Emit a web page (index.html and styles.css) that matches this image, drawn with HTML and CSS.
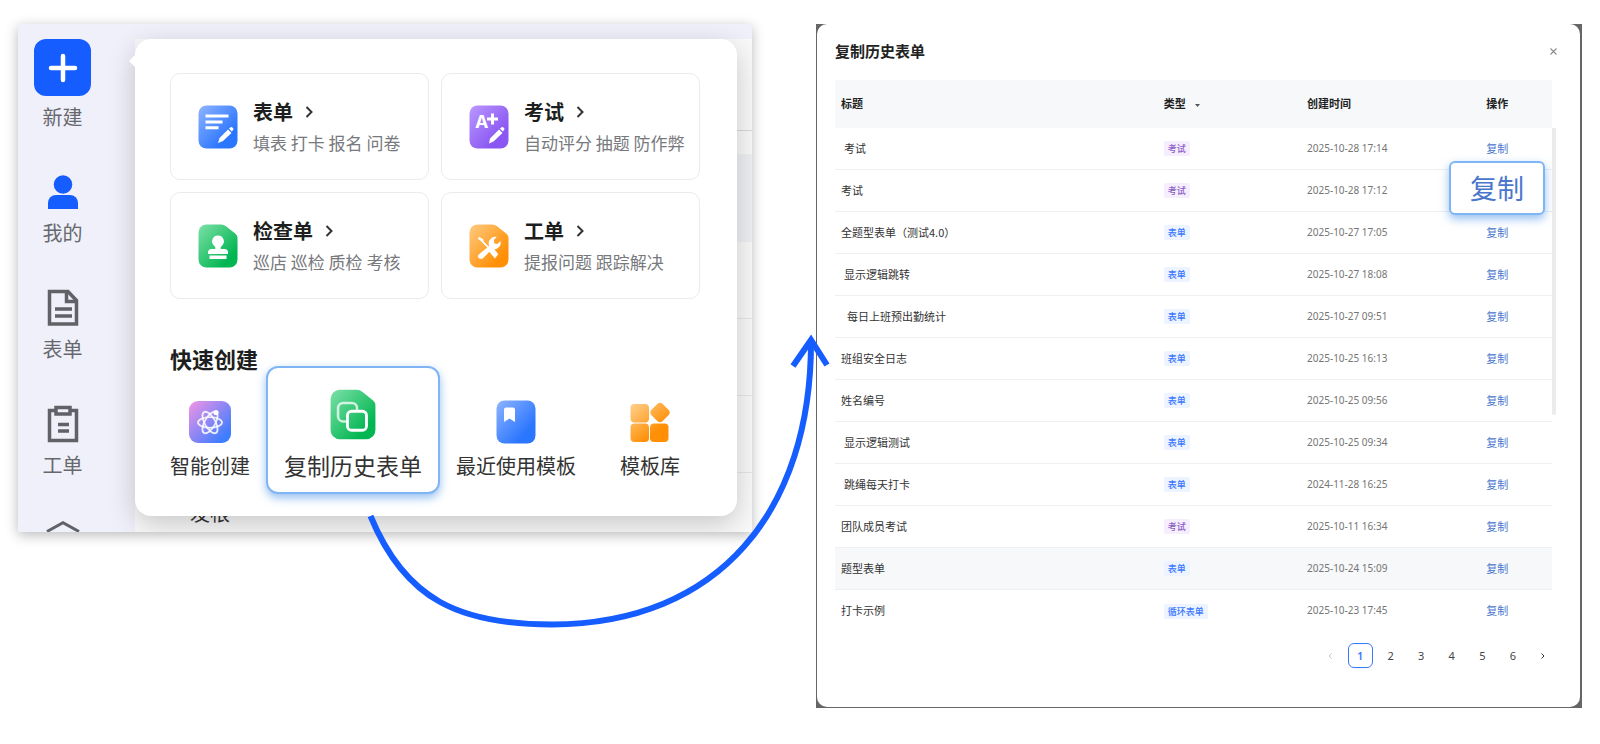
FILE: index.html
```html
<!DOCTYPE html>
<html lang="zh-CN">
<head>
<meta charset="utf-8">
<meta name="viewport" content="width=device-width, initial-scale=1">
<title>复制历史表单</title>
<link rel="stylesheet" href="styles.css">
</head>
<body>
<main class="page">
  <section class="launcher">
    <nav class="sidebar" aria-label="主导航">
      <button class="nav-item" type="button">
        <span class="nav-plus">
          <svg width="57" height="57" viewBox="0 0 57 57"><path d="M29 17v24M17 29h24" stroke="#fff" stroke-width="4.500" stroke-linecap="round"/></svg>
        </span>
        <span>新建</span>
      </button>
      <a class="nav-item nav-gap" href="#mine">
        <svg width="32" height="38" viewBox="0 0 32 38"><circle cx="16" cy="11.500" r="9.300" fill="#165dff"/><path d="M1 36v-6a8 8 0 0 1 8-8h14a8 8 0 0 1 8 8v6z" fill="#165dff"/></svg>
        <span>我的</span>
      </a>
      <a class="nav-item nav-gap" href="#forms">
        <svg width="32" height="38" viewBox="0 0 32 38" fill="none" stroke="#606267" stroke-width="3.500"><path d="M2.500 2.500h18.500l8.500 9v23.500h-27z"/><path d="M19.500 2.500v10h10M8 20h17M8 27h17"/></svg>
        <span>表单</span>
      </a>
      <a class="nav-item nav-gap" href="#orders">
        <svg width="32" height="38" viewBox="0 0 32 38" fill="none" stroke="#606267" stroke-width="3.500"><path d="M9 5.500H2.500v30h27v-30H23"/><path d="M9 2.500h14v6.500H9zM11 19.500h11M11 26h11"/></svg>
        <span>工单</span>
      </a>
      <a class="nav-item nav-gap" href="#more" aria-label="更多">
        <svg width="34" height="11" viewBox="0 0 34 11" fill="none" stroke="#606267" stroke-width="3"><path d="M1 10.500L17 1.800l16 8.700"/></svg>
      </a>
    </nav>

    <div class="workspace">
      <div class="backdrop" aria-hidden="true">
        <div class="backdrop-bar"></div>
        <div class="backdrop-head"></div>
        <div class="backdrop-sub"></div>
        <div class="backdrop-active"></div>
        <div class="backdrop-row"></div>
        <div class="backdrop-row"></div>
        <div class="backdrop-row"></div>
        <div class="backdrop-foot">发根</div>
      </div>

      <div class="popover">
        <div class="cards">
          <button class="card" type="button">
            <svg width="40" height="44" viewBox="0 0 40 44">
              <defs><linearGradient id="blue" x1="0" y1="0" x2="1" y2="1"><stop offset="0" stop-color="#8fb4ff"/><stop offset=".75" stop-color="#2b76ff"/></linearGradient></defs>
              <rect x=".5" y=".5" width="39" height="43" rx="8" fill="url(#blue)"/>
              <path d="M9 11h20M9 17h14M9 22.800h10" stroke="#fff" stroke-width="3" stroke-linecap="square"/>
              <path d="M20 38l1.500-5 8.500-8.500 3.500 3.500-8.500 8zM31 23.500l1.600-1.300q1-.5 1.800.2l.8.900q.6.900-.1 1.700l-1.400 1.500z" fill="#fff"/>
            </svg>
            <span class="card-text"><span class="card-title">表单<svg width="8" height="12" viewBox="0 0 8 12"><path d="M1.500 1l5 5-5 5"/></svg></span><span class="card-desc">填表 打卡 报名 问卷</span></span>
          </button>
          <button class="card" type="button">
            <svg width="40" height="44" viewBox="0 0 40 44">
              <defs><linearGradient id="violet" x1="0" y1="0" x2="1" y2="1"><stop offset="0" stop-color="#bb98ff"/><stop offset=".75" stop-color="#8a57f2"/></linearGradient></defs>
              <rect x=".5" y=".5" width="39" height="43" rx="8" fill="url(#violet)"/>
              <text class="grade" x="6" y="22.500">A</text>
              <path d="M23.500 8.500v11M18 14h11" stroke="#fff" stroke-width="3"/>
              <path d="M20 38.500l1-5 9-9 3.500 3.500-9 8.500zM31 23.500l1.600-1.300q1-.5 1.800.2l.8.900q.6.900-.1 1.700l-1.400 1.500z" fill="#fff"/>
            </svg>
            <span class="card-text"><span class="card-title">考试<svg width="8" height="12" viewBox="0 0 8 12"><path d="M1.500 1l5 5-5 5"/></svg></span><span class="card-desc">自动评分 抽题 防作弊</span></span>
          </button>
          <button class="card" type="button">
            <svg width="40" height="44" viewBox="0 0 40 44">
              <defs><linearGradient id="green" x1="0" y1="0" x2="1" y2="1"><stop offset="0" stop-color="#7de0a8"/><stop offset=".8" stop-color="#02b652"/></linearGradient></defs>
              <path d="M8.500.5H23q3 0 5 1.700l9.500 7.600q2 1.700 2 4.200v21.500a8 8 0 0 1-8 8h-23a8 8 0 0 1-8-8v-27a8 8 0 0 1 8-8z" fill="url(#green)"/>
              <path d="M20 11.500a6 6 0 0 1 3.200 11q-.9.900-.4 2.500h3.700a3.500 3.500 0 0 1 3.500 3.500v1.500h-20v-1.500a3.500 3.500 0 0 1 3.500-3.500h3.700q.5-1.600-.4-2.500a6 6 0 0 1 3.200-11zM11.500 31.500h17v3.500h-17z" fill="#fff"/>
            </svg>
            <span class="card-text"><span class="card-title">检查单<svg width="8" height="12" viewBox="0 0 8 12"><path d="M1.500 1l5 5-5 5"/></svg></span><span class="card-desc">巡店 巡检 质检 考核</span></span>
          </button>
          <button class="card" type="button">
            <svg width="40" height="44" viewBox="0 0 40 44">
              <defs><linearGradient id="orange" x1="0" y1="0" x2="1" y2="1"><stop offset="0" stop-color="#ffca80"/><stop offset=".8" stop-color="#ff8f05"/></linearGradient></defs>
              <path d="M8.500.5H23q3 0 5 1.700l9.500 7.600q2 1.700 2 4.200v21.500a8 8 0 0 1-8 8h-23a8 8 0 0 1-8-8v-27a8 8 0 0 1 8-8z" fill="url(#orange)"/>
              <path d="M9.200 14.800l1.300-.8 3 1.800.8 2.600 6 6" stroke="#fff" stroke-width="1.600" fill="#fff"/>
              <path d="M20.500 24.800l3-2.300 5.700 7.800-3.200 4.200-6-7z" fill="#fff"/>
              <path d="M9.500 33.800q-1.500-1.800.3-3.300l10.200-8.500q-1.300-5 2.500-8 2.400-1.800 5.300-1.200l-3 3.300.6 3.300 3.100.7 2.900-3.100q1 3-1.100 5.800-2.900 3.300-7.300 2.300l-9 9.200q-2.200 1.800-4.500-.5z" fill="#fff"/>
            </svg>
            <span class="card-text"><span class="card-title">工单<svg width="8" height="12" viewBox="0 0 8 12"><path d="M1.500 1l5 5-5 5"/></svg></span><span class="card-desc">提报问题 跟踪解决</span></span>
          </button>
        </div>

        <h2 class="quick-heading">快速创建</h2>
        <div class="quick">
          <button class="quick-item" type="button">
            <svg width="44" height="44" viewBox="0 0 44 44">
              <defs><linearGradient id="smart" x1="0" y1="0" x2="1" y2="1"><stop offset=".05" stop-color="#ea92e6"/><stop offset=".85" stop-color="#3f7dff"/></linearGradient></defs>
              <rect x="1" y="1" width="42" height="42" rx="9" fill="url(#smart)"/>
              <g fill="none" stroke="#fff" stroke-opacity=".85" stroke-width="1.800"><ellipse cx="22" cy="22.500" rx="12" ry="5.300"/><ellipse cx="22" cy="22.500" rx="12" ry="5.300" transform="rotate(60 22 22.500)"/><ellipse cx="22" cy="22.500" rx="12" ry="5.300" transform="rotate(120 22 22.500)"/></g>
              <circle cx="28" cy="12.500" r="2.600" fill="#fff"/>
            </svg>
            <span>智能创建</span>
          </button>
          <button class="quick-item quick-active" type="button">
            <svg width="46" height="51" viewBox="0 0 40 44">
              <path d="M8.500.5H23q3 0 5 1.700l9.500 7.600q2 1.700 2 4.200v21.500a8 8 0 0 1-8 8h-23a8 8 0 0 1-8-8v-27a8 8 0 0 1 8-8z" fill="url(#green)"/>
              <path d="M14 28h-2.500a4.500 4.500 0 0 1-4.500-4.500v-7a4.500 4.500 0 0 1 4.500-4.500h7.500a4.500 4.500 0 0 1 4.500 4.500V19" fill="none" stroke="#fff" stroke-opacity=".75" stroke-width="2.200"/>
              <rect x="15.200" y="19.200" width="16.500" height="16.500" rx="3.500" fill="none" stroke="#fff" stroke-width="2.500"/>
            </svg>
            <span>复制历史表单</span>
          </button>
          <button class="quick-item" type="button">
            <svg width="40" height="44" viewBox="0 0 40 44">
              <rect x=".5" y=".5" width="39" height="43" rx="8" fill="url(#blue)"/>
              <path d="M10 7.500h7q2 0 2 2V22l-5.500-3.500L8 22V9.500q0-2 2-2z" fill="#fff"/>
            </svg>
            <span>最近使用模板</span>
          </button>
          <button class="quick-item quick-last" type="button">
            <svg width="40" height="44" viewBox="0 0 40 44">
              <defs><linearGradient id="lib" gradientUnits="userSpaceOnUse" x1="4" y1="6" x2="32" y2="38"><stop offset="0" stop-color="#ffca80"/><stop offset=".8" stop-color="#ff8f05"/></linearGradient></defs>
              <g fill="url(#lib)"><rect x=".5" y="4" width="18.500" height="18.500" rx="4"/><rect x=".5" y="23.500" width="18.500" height="18.500" rx="4"/><rect x="20" y="23.500" width="18.500" height="18.500" rx="4"/><path d="M27.500 3.700q2.500-2 5 0l6.200 6.300q2 2.500 0 5L32.500 21.200q-2.500 2-5 0l-6.200-6.200q-2-2.500 0-5z"/></g>
            </svg>
            <span>模板库</span>
          </button>
        </div>
      </div>
    </div>
  </section>

  <section class="history">
    <div class="dialog" role="dialog" aria-labelledby="dialog-title">
      <header class="dialog-head">
        <h1 class="dialog-title" id="dialog-title">复制历史表单</h1>
        <button class="close" type="button" aria-label="关闭"><svg width="7" height="7" viewBox="0 0 7 7"><path d="M.5.5l6 6M6.500.5l-6 6" stroke="#8c8c8c" stroke-width="1.100"/></svg></button>
      </header>
      <div class="table-wrap">
        <table class="table">
          <thead>
            <tr><th class="col-title">标题</th><th class="col-type">类型<svg class="caret" width="5" height="3" viewBox="0 0 5 3"><path d="M0 0h5L2.500 3z" fill="#555"/></svg></th><th class="col-time">创建时间</th><th class="col-action">操作</th></tr>
          </thead>
          <tbody>
            <tr><td class="indent">考试</td><td><span class="tag tag-exam">考试</span></td><td class="time">2025-10-28 17:14</td><td><button class="copy" type="button">复制</button></td></tr>
            <tr><td>考试</td><td><span class="tag tag-exam">考试</span></td><td class="time">2025-10-28 17:12</td><td class="focus-cell"><button class="copy copy-large" type="button">复制</button></td></tr>
            <tr><td>全题型表单（测试4.0）</td><td><span class="tag">表单</span></td><td class="time">2025-10-27 17:05</td><td><button class="copy" type="button">复制</button></td></tr>
            <tr><td class="indent">显示逻辑跳转</td><td><span class="tag">表单</span></td><td class="time">2025-10-27 18:08</td><td><button class="copy" type="button">复制</button></td></tr>
            <tr><td class="indent-wide">每日上班预出勤统计</td><td><span class="tag">表单</span></td><td class="time">2025-10-27 09:51</td><td><button class="copy" type="button">复制</button></td></tr>
            <tr><td>班组安全日志</td><td><span class="tag">表单</span></td><td class="time">2025-10-25 16:13</td><td><button class="copy" type="button">复制</button></td></tr>
            <tr><td>姓名编号</td><td><span class="tag">表单</span></td><td class="time">2025-10-25 09:56</td><td><button class="copy" type="button">复制</button></td></tr>
            <tr><td class="indent">显示逻辑测试</td><td><span class="tag">表单</span></td><td class="time">2025-10-25 09:34</td><td><button class="copy" type="button">复制</button></td></tr>
            <tr><td class="indent">跳绳每天打卡</td><td><span class="tag">表单</span></td><td class="time">2024-11-28 16:25</td><td><button class="copy" type="button">复制</button></td></tr>
            <tr><td>团队成员考试</td><td><span class="tag tag-exam">考试</span></td><td class="time">2025-10-11 16:34</td><td><button class="copy" type="button">复制</button></td></tr>
            <tr class="row-hover"><td>题型表单</td><td><span class="tag">表单</span></td><td class="time">2025-10-24 15:09</td><td><button class="copy" type="button">复制</button></td></tr>
            <tr><td>打卡示例</td><td><span class="tag">循环表单</span></td><td class="time">2025-10-23 17:45</td><td><button class="copy" type="button">复制</button></td></tr>
          </tbody>
        </table>
        <div class="scrollbar"></div>
      </div>
      <nav class="pager" aria-label="分页">
        <button class="page-btn page-off" type="button" aria-label="上一页" disabled><svg width="4" height="6" viewBox="0 0 4 6"><path d="M3.500.5L1 3l2.500 2.500"/></svg></button>
        <button class="page-btn page-current" type="button" aria-current="page">1</button>
        <button class="page-btn" type="button">2</button>
        <button class="page-btn" type="button">3</button>
        <button class="page-btn" type="button">4</button>
        <button class="page-btn" type="button">5</button>
        <button class="page-btn" type="button">6</button>
        <button class="page-btn" type="button" aria-label="下一页"><svg width="4" height="6" viewBox="0 0 4 6"><path d="M.5.500L3 3 .5 5.500"/></svg></button>
      </nav>
    </div>
  </section>

  <svg class="flow-arrow" viewBox="0 0 1600 744" fill="none" stroke="#165dff" stroke-width="6" aria-hidden="true">
    <path d="M370.500 516C405 600 460 624.500 552 624.500C720 624 811 510 811 342"/>
    <path d="M793 366L811 340L827 365"/>
  </svg>
</main>
</body>
</html>
```

FILE: styles.css
```css
* {
  box-sizing: border-box;
}

body {
  margin: 0;
  background: #fff;
  color: #333;
  font-family: "Noto Sans CJK SC", "Noto Sans", sans-serif;
}

button {
  margin: 0;
  padding: 0;
  border: 0;
  background: none;
  color: inherit;
  font: inherit;
  cursor: pointer;
}

a {
  color: inherit;
  text-decoration: none;
}

svg {
  display: block;
  flex: none;
}

.page {
  position: relative;
  display: grid;
  grid-template-columns: minmax(0, 734fr) minmax(0, 766fr);
  column-gap: 64px;
  align-items: start;
  padding: 24px 18px 36px;
}

.flow-arrow {
  position: absolute;
  top: 0;
  left: 0;
  width: 100%;
  pointer-events: none;
}

/* Launcher panel */

.launcher {
  display: flex;
  overflow: hidden;
  background: #f0f0fa;
  box-shadow: 0 3px 12px rgba(0, 0, 0, 0.28);
}

.sidebar {
  display: flex;
  flex: none;
  flex-direction: column;
  gap: 44px;
  width: 117px;
  padding: 15px 28px 0 0;
}

.nav-item {
  display: flex;
  flex-direction: column;
  align-items: center;
  gap: 10px;
  color: #66686e;
  font-size: 20px;
  line-height: 24px;
}

.nav-plus {
  margin-bottom: -1px;
  border-radius: 12px;
  background: #165dff;
}

.workspace {
  position: relative;
  flex: 1;
  min-width: 0;
  padding: 15px 15px 15px 0;
}

.backdrop {
  position: absolute;
  inset: 0;
  display: flex;
  flex-direction: column;
  background: #f9f9f9;
}

.backdrop div {
  flex: none;
}

.backdrop-bar {
  height: 15px;
  background: #f0f0fa;
}

.backdrop-head {
  height: 92px;
  border-bottom: 1px solid #d9d9d9;
}

.backdrop-sub {
  height: 23px;
}

.backdrop-active {
  height: 88px;
  background: #eef0f3;
}

.backdrop-row {
  height: 77px;
  border-bottom: 1px solid #e6e6e6;
}

.backdrop-foot {
  padding: 28px 0 0 55px;
  color: #333;
  font-size: 20px;
  line-height: 24px;
}

.popover {
  position: relative;
  padding: 34px 37px 22px 35px;
  border-radius: 16px;
  background: #fff;
  box-shadow: 0 8px 28px rgba(0, 0, 0, 0.2);
}

.popover::before {
  position: absolute;
  top: 17px;
  left: -4px;
  width: 10px;
  height: 10px;
  background: #fff;
  content: "";
  transform: rotate(45deg);
}

.cards {
  display: grid;
  grid-template-columns: repeat(2, minmax(0, 1fr));
  gap: 12px;
}

.card {
  display: flex;
  align-items: center;
  gap: 15px;
  height: 107px;
  padding: 0 0 0 27px;
  border: 1px solid #ebebeb;
  border-radius: 10px;
  text-align: left;
}

.card-text {
  display: flex;
  flex-direction: column;
  gap: 6px;
  white-space: nowrap;
}

.card-title {
  display: flex;
  align-items: center;
  gap: 12px;
  color: #1d1e20;
  font-size: 20px;
  font-weight: 700;
  line-height: 26px;
}

.card-title svg {
  fill: none;
  stroke: #333;
  stroke-width: 2px;
}

.card-desc {
  color: #77797d;
  font-size: 17px;
  line-height: 24px;
}

.grade {
  fill: #fff;
  font-family: Inter, sans-serif;
  font-size: 18px;
  font-weight: 700;
}

.quick-heading {
  margin: 48px 0 -3px;
  color: #1d1e20;
  font-size: 22px;
  font-weight: 700;
  line-height: 22px;
}

.quick {
  display: flex;
  align-items: center;
  gap: 16px;
}

.quick-item {
  display: flex;
  flex: none;
  flex-direction: column;
  align-items: center;
  gap: 10px;
  padding-top: 18px;
  color: #333;
  font-size: 20px;
  line-height: 24px;
  white-space: nowrap;
}

.quick-active {
  gap: 12px;
  padding: 21px 16px 14px;
  border: 2px solid #80b5f5;
  border-radius: 12px;
  background: #fff;
  box-shadow: 0 4px 10px rgba(64, 140, 230, 0.55);
  font-size: 23px;
  line-height: 26px;
}

.quick-last {
  margin-left: 28px;
}

/* History dialog */

.history {
  padding: 0 2px 1px 1px;
  background: #666;
}

.dialog {
  padding: 17px 28px 39px 18px;
  border-radius: 10px;
  background: #fff;
}

.dialog-head {
  display: flex;
  align-items: center;
  justify-content: space-between;
  margin-bottom: 19px;
}

.dialog-title {
  margin: 0;
  color: #222;
  font-size: 15px;
  font-weight: 700;
  line-height: 20px;
}

.close {
  margin-right: -5px;
}

.table-wrap {
  position: relative;
}

.table {
  width: 100%;
  border-spacing: 0;
  table-layout: fixed;
  color: #333;
  font-size: 11px;
  line-height: 16px;
}

.table th {
  height: 48px;
  padding: 0 6px 2px;
  background: #f6f8fa;
  color: #1f1f1f;
  font-weight: 700;
  text-align: left;
}

.table td {
  height: 42px;
  padding: 0 6px 2px;
  border-bottom: 1px solid #efefef;
}

.table tr:last-child td {
  border-bottom: 0;
}

.col-title {
  width: 45%;
}

.col-type {
  width: 20%;
}

.col-time {
  width: 25%;
}

.col-action {
  width: 10%;
}

.caret {
  display: inline-block;
  margin-left: 9px;
  vertical-align: middle;
}

.table .indent {
  padding-left: 9px;
}

.table .indent-wide {
  padding-left: 12px;
}

.row-hover td {
  background: #f6f8fa;
}

.table .time {
  color: #757575;
  font-family: "Noto Sans", sans-serif;
  font-size: 10px;
}

.tag {
  display: inline-block;
  padding: 0 4px;
  border-radius: 2px;
  background: #edf3ff;
  color: #3a78ff;
  font-size: 9px;
  font-weight: 500;
  line-height: 15px;
  vertical-align: middle;
}

.tag-exam {
  background: #f6eeff;
  color: #8a5fc4;
}

.copy {
  color: #4a76cc;
}

.focus-cell {
  position: relative;
}

.copy-large {
  position: absolute;
  top: -9px;
  right: 7px;
  width: 96px;
  height: 54px;
  border: 2px solid #80b5f5;
  border-radius: 6px;
  background: #fff;
  box-shadow: 0 4px 10px rgba(64, 140, 230, 0.55);
  font-size: 27px;
  line-height: 30px;
}

.scrollbar {
  position: absolute;
  top: 48px;
  left: 100%;
  width: 4px;
  height: 287px;
  border-radius: 0 0 2px 2px;
  background: #ebebeb;
}

.pager {
  display: flex;
  justify-content: space-between;
  width: 239px;
  margin: 11px -4px 0 auto;
}

.page-btn {
  display: flex;
  align-items: center;
  justify-content: center;
  width: 25px;
  height: 25px;
  border-radius: 6px;
  color: #444;
  font-family: "Noto Sans", sans-serif;
  font-size: 11px;
}

.page-btn svg {
  fill: none;
  stroke: #333;
}

.page-off svg {
  stroke: #c4c4c4;
}

.page-current {
  border: 1px solid #3a78ff;
  color: #3a78ff;
  font-weight: 600;
}
```
